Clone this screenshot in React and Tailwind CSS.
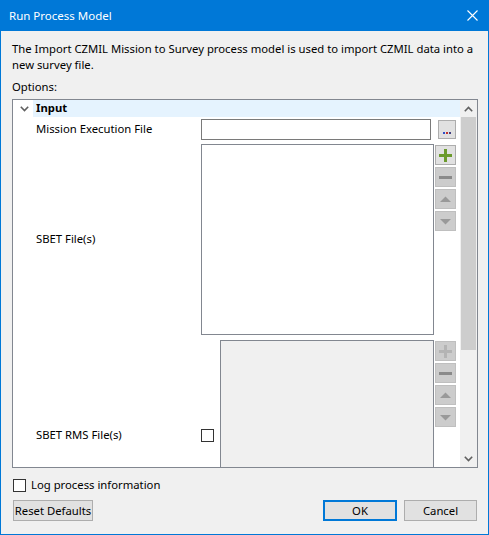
const font = { fontFamily: '"Segoe UI", "Noto Sans", "Open Sans", sans-serif' };

function SideButton({ kind, enabled }) {
  const box = enabled
    ? 'bg-[#e1e1e1] border-[#adadad]'
    : 'bg-[#cccccc] border-[#bfbfbf]';
  const plusFill = enabled ? '#6b9a2c' : '#b4b4b4';
  return (
    <div className={`w-[21px] h-[20px] border flex items-center justify-center ${box}`}>
      <svg width="13" height="13" viewBox="0 0 13 13">
        {kind === 'plus' && (
          <path d="M5 0h3v5h5v3H8v5H5V8H0V5h5z" fill={plusFill} />
        )}
        {kind === 'minus' && <rect x="0" y="5" width="13" height="3" fill="#8a8a8a" />}
        {kind === 'up' && <path d="M1 9L6.5 3.5L12 9z" fill="#999999" />}
        {kind === 'down' && <path d="M1 4L6.5 9.5L12 4z" fill="#999999" />}
      </svg>
    </div>
  );
}

function ButtonColumn({ plusEnabled }) {
  return (
    <div className="flex flex-col gap-[2px] self-start mt-[1px] ml-[1px]">
      <SideButton kind="plus" enabled={plusEnabled} />
      <SideButton kind="minus" />
      <SideButton kind="up" />
      <SideButton kind="down" />
    </div>
  );
}

export default function App() {
  return (
    <div
      className="w-[489px] h-[535px] flex flex-col bg-[#f0f0f0] border-l border-r border-b border-[#0078d7] text-[11.3px] text-black overflow-hidden whitespace-nowrap"
      style={font}
    >
      {/* Title bar */}
      <div className="h-[31px] shrink-0 bg-[#0078d7] flex items-center justify-between pl-[8px] pr-[10px] text-white text-[11.5px]">
        <span className="leading-none">Run Process Model</span>
        <svg width="11" height="11" viewBox="0 0 11 11">
          <path d="M0.5 0.5L10.5 10.5M10.5 0.5L0.5 10.5" stroke="white" strokeWidth="1.1" />
        </svg>
      </div>

      <div className="flex flex-col pl-[11px] pr-[10px] pt-[10px]">
        <p className="leading-[16px]">
          The Import CZMIL Mission to Survey process model is used to import CZMIL data into a
          <br />
          new survey file.
        </p>
        <p className="leading-[16px] mt-[6px]">Options:</p>

        {/* Property grid */}
        <div className="mt-[4px] h-[369px] border border-[#828790] bg-white flex overflow-hidden">
          <div className="flex-1 flex flex-col overflow-hidden">
            <div className="h-[17px] shrink-0 flex">
              <div className="w-[20px] flex items-center justify-center pl-[2px]">
                <svg width="9" height="6" viewBox="0 0 9 6">
                  <path d="M0.8 0.8L4.5 4.5L8.2 0.8" fill="none" stroke="#5f5f5f" strokeWidth="1.6" />
                </svg>
              </div>
              <div className="flex-1 bg-[#e5f3fe] flex items-center pl-[3px] font-bold">Input</div>
            </div>

            <div className="h-[21px] mt-[2px] shrink-0 flex items-center pl-[23px]">
              <div className="w-[165px]">Mission Execution File</div>
              <div className="w-[230px] h-[21px] border border-[#7a7a7a] bg-white" />
              <div className="ml-[7px] w-[18px] h-[19px] bg-[#e1e1e1] border border-[#adadad] flex items-end justify-center pb-[4px]">
                <span className="flex gap-[1px]">
                  <span className="w-[2px] h-[2px] bg-[#3050c8]" />
                  <span className="w-[2px] h-[2px] bg-[#c03030]" />
                  <span className="w-[2px] h-[2px] bg-[#404080]" />
                </span>
              </div>
            </div>

            <div className="h-[191px] mt-[4px] shrink-0 flex items-center pl-[23px]">
              <div className="w-[165px]">SBET File(s)</div>
              <div className="w-[233px] h-[191px] border border-[#828790] bg-white" />
              <ButtonColumn plusEnabled />
            </div>

            <div className="h-[191px] mt-[5px] shrink-0 flex items-center pl-[23px]">
              <div className="w-[165px]">SBET RMS File(s)</div>
              <div className="w-[13px] h-[13px] border border-[#333333] bg-white" />
              <div className="ml-[6px] w-[214px] h-[191px] border border-[#828790] bg-[#f0f0f0]" />
              <ButtonColumn />
            </div>
          </div>

          {/* Scrollbar */}
          <div className="w-[17px] shrink-0 bg-[#f0f0f0] flex flex-col">
            <div className="h-[17px] flex items-center justify-center">
              <svg width="9" height="6" viewBox="0 0 9 6">
                <path d="M0.8 5.2L4.5 1.5L8.2 5.2" fill="none" stroke="#606060" strokeWidth="1.6" />
              </svg>
            </div>
            <div className="mx-[1px] h-[233px] bg-[#cdcdcd]" />
            <div className="flex-1" />
            <div className="h-[17px] flex items-center justify-center">
              <svg width="9" height="6" viewBox="0 0 9 6">
                <path d="M0.8 0.8L4.5 4.5L8.2 0.8" fill="none" stroke="#606060" strokeWidth="1.6" />
              </svg>
            </div>
          </div>
        </div>

        <div className="mt-[9px] flex items-center">
          <div className="w-[13px] h-[13px] border border-[#333333] bg-white ml-[1px]" />
          <span className="ml-[5px] leading-[16px]">Log process information</span>
        </div>

        <div className="mt-[7px] flex items-center">
          <button className="ml-[1px] w-[80px] h-[21px] bg-[#e1e1e1] border border-[#adadad] flex items-center justify-center leading-none">
            Reset Defaults
          </button>
          <div className="flex-1" />
          <button className="w-[74px] h-[21px] bg-[#e1e1e1] border-2 border-[#0078d7] flex items-center justify-center leading-none">
            OK
          </button>
          <button className="ml-[7px] mr-[1px] w-[73px] h-[21px] bg-[#e1e1e1] border border-[#adadad] flex items-center justify-center leading-none">
            Cancel
          </button>
        </div>
      </div>
    </div>
  );
}
